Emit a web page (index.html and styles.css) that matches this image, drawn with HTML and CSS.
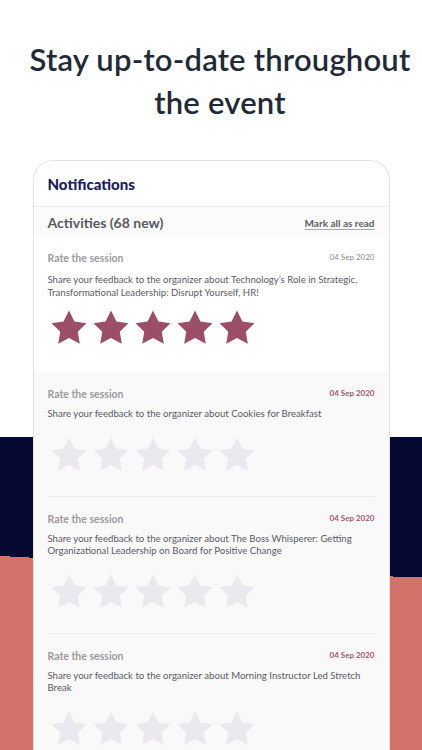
FILE: index.html
```html
<!DOCTYPE html>
<html lang="en">
<head>
<meta charset="utf-8">
<title>Notifications</title>
<link rel="stylesheet" href="styles.css">
</head>
<body>
<div class="page">
  <h1 class="headline">Stay up-to-date throughout<br>the event</h1>
  <div class="card">
    <div class="card-header">Notifications</div>
    <div class="activities">
      <span class="activities-title">Activities (68 new)</span>
      <a class="mark-read">Mark all as read</a>
    </div>

    <div class="item item-read">
      <div class="item-inner">
        <div class="item-top">
          <span class="item-title">Rate the session</span>
          <span class="item-date">04 Sep 2020</span>
        </div>
        <p class="item-desc">Share your feedback to the organizer about Technology’s Role in Strategic, Transformational Leadership: Disrupt Yourself, HR!</p>
        <div class="stars stars-filled">
          <svg viewBox="0 0 24 24"><path d="M12 2l3.09 6.26L22 9.27l-5 4.87 1.18 6.88L12 17.77l-6.18 3.25L7 14.14 2 9.27l6.91-1.01L12 2z"/></svg>
          <svg viewBox="0 0 24 24"><path d="M12 2l3.09 6.26L22 9.27l-5 4.87 1.18 6.88L12 17.77l-6.18 3.25L7 14.14 2 9.27l6.91-1.01L12 2z"/></svg>
          <svg viewBox="0 0 24 24"><path d="M12 2l3.09 6.26L22 9.27l-5 4.87 1.18 6.88L12 17.77l-6.18 3.25L7 14.14 2 9.27l6.91-1.01L12 2z"/></svg>
          <svg viewBox="0 0 24 24"><path d="M12 2l3.09 6.26L22 9.27l-5 4.87 1.18 6.88L12 17.77l-6.18 3.25L7 14.14 2 9.27l6.91-1.01L12 2z"/></svg>
          <svg viewBox="0 0 24 24"><path d="M12 2l3.09 6.26L22 9.27l-5 4.87 1.18 6.88L12 17.77l-6.18 3.25L7 14.14 2 9.27l6.91-1.01L12 2z"/></svg>
        </div>
      </div>
    </div>

    <div class="item item-new">
      <div class="item-inner">
        <div class="item-top">
          <span class="item-title">Rate the session</span>
          <span class="item-date">04 Sep 2020</span>
        </div>
        <p class="item-desc">Share your feedback to the organizer about Cookies for Breakfast</p>
        <div class="stars">
          <svg viewBox="0 0 24 24"><path d="M12 2l3.09 6.26L22 9.27l-5 4.87 1.18 6.88L12 17.77l-6.18 3.25L7 14.14 2 9.27l6.91-1.01L12 2z"/></svg>
          <svg viewBox="0 0 24 24"><path d="M12 2l3.09 6.26L22 9.27l-5 4.87 1.18 6.88L12 17.77l-6.18 3.25L7 14.14 2 9.27l6.91-1.01L12 2z"/></svg>
          <svg viewBox="0 0 24 24"><path d="M12 2l3.09 6.26L22 9.27l-5 4.87 1.18 6.88L12 17.77l-6.18 3.25L7 14.14 2 9.27l6.91-1.01L12 2z"/></svg>
          <svg viewBox="0 0 24 24"><path d="M12 2l3.09 6.26L22 9.27l-5 4.87 1.18 6.88L12 17.77l-6.18 3.25L7 14.14 2 9.27l6.91-1.01L12 2z"/></svg>
          <svg viewBox="0 0 24 24"><path d="M12 2l3.09 6.26L22 9.27l-5 4.87 1.18 6.88L12 17.77l-6.18 3.25L7 14.14 2 9.27l6.91-1.01L12 2z"/></svg>
        </div>
      </div>
    </div>

    <div class="item item-new">
      <div class="item-inner">
        <div class="item-top">
          <span class="item-title">Rate the session</span>
          <span class="item-date">04 Sep 2020</span>
        </div>
        <p class="item-desc">Share your feedback to the organizer about The Boss Whisperer: Getting Organizational Leadership on Board for Positive Change</p>
        <div class="stars">
          <svg viewBox="0 0 24 24"><path d="M12 2l3.09 6.26L22 9.27l-5 4.87 1.18 6.88L12 17.77l-6.18 3.25L7 14.14 2 9.27l6.91-1.01L12 2z"/></svg>
          <svg viewBox="0 0 24 24"><path d="M12 2l3.09 6.26L22 9.27l-5 4.87 1.18 6.88L12 17.77l-6.18 3.25L7 14.14 2 9.27l6.91-1.01L12 2z"/></svg>
          <svg viewBox="0 0 24 24"><path d="M12 2l3.09 6.26L22 9.27l-5 4.87 1.18 6.88L12 17.77l-6.18 3.25L7 14.14 2 9.27l6.91-1.01L12 2z"/></svg>
          <svg viewBox="0 0 24 24"><path d="M12 2l3.09 6.26L22 9.27l-5 4.87 1.18 6.88L12 17.77l-6.18 3.25L7 14.14 2 9.27l6.91-1.01L12 2z"/></svg>
          <svg viewBox="0 0 24 24"><path d="M12 2l3.09 6.26L22 9.27l-5 4.87 1.18 6.88L12 17.77l-6.18 3.25L7 14.14 2 9.27l6.91-1.01L12 2z"/></svg>
        </div>
      </div>
    </div>

    <div class="item item-new">
      <div class="item-inner">
        <div class="item-top">
          <span class="item-title">Rate the session</span>
          <span class="item-date">04 Sep 2020</span>
        </div>
        <p class="item-desc">Share your feedback to the organizer about Morning Instructor Led Stretch Break</p>
        <div class="stars">
          <svg viewBox="0 0 24 24"><path d="M12 2l3.09 6.26L22 9.27l-5 4.87 1.18 6.88L12 17.77l-6.18 3.25L7 14.14 2 9.27l6.91-1.01L12 2z"/></svg>
          <svg viewBox="0 0 24 24"><path d="M12 2l3.09 6.26L22 9.27l-5 4.87 1.18 6.88L12 17.77l-6.18 3.25L7 14.14 2 9.27l6.91-1.01L12 2z"/></svg>
          <svg viewBox="0 0 24 24"><path d="M12 2l3.09 6.26L22 9.27l-5 4.87 1.18 6.88L12 17.77l-6.18 3.25L7 14.14 2 9.27l6.91-1.01L12 2z"/></svg>
          <svg viewBox="0 0 24 24"><path d="M12 2l3.09 6.26L22 9.27l-5 4.87 1.18 6.88L12 17.77l-6.18 3.25L7 14.14 2 9.27l6.91-1.01L12 2z"/></svg>
          <svg viewBox="0 0 24 24"><path d="M12 2l3.09 6.26L22 9.27l-5 4.87 1.18 6.88L12 17.77l-6.18 3.25L7 14.14 2 9.27l6.91-1.01L12 2z"/></svg>
        </div>
      </div>
    </div>
  </div>
</div>
</body>
</html>
```

FILE: styles.css
```css
html, body {
  margin: 0;
  padding: 0;
}
body {
  width: 422px;
  height: 750px;
  overflow: hidden;
  font-family: "Lato", "Noto Sans", sans-serif;
  background-color: #ffffff;
  background-image:
    linear-gradient(to top right, #d3716b 50%, transparent 50%),
    linear-gradient(#d3716b, #d3716b),
    linear-gradient(#050833, #050833);
  background-repeat: no-repeat;
  background-position: 0 556px, 0 577px, 0 437px;
  background-size: 422px 22px, 422px 200px, 422px 320px;
}
.page {
  display: flex;
  flex-direction: column;
  align-items: center;
  height: 750px;
}
.headline {
  margin: 38px 0 0;
  padding-left: 18px;
  font-size: 31px;
  line-height: 43px;
  font-weight: 600;
  color: #232a37;
  text-align: center;
  letter-spacing: 0.2px;
}
.card {
  margin-top: 36px;
  width: 355px;
  flex: 1;
  background: #ffffff;
  border: 1px solid #e3e3e6;
  border-bottom: none;
  border-radius: 20px 20px 0 0;
  overflow: hidden;
}
.card-header {
  height: 45px;
  padding: 0 14px;
  display: flex;
  align-items: center;
  font-size: 15px;
  font-weight: 900;
  color: #1a1c5c;
  border-bottom: 1px solid #ececee;
  box-shadow: 0 1px 2px rgba(0,0,0,0.04);
}
.activities {
  height: 31px;
  padding: 0 14px;
  display: flex;
  align-items: center;
  justify-content: space-between;
  background: #fbfbfb;
}
.activities-title {
  font-size: 14px;
  font-weight: 700;
  color: #58585f;
}
.mark-read {
  font-size: 10px;
  font-weight: 700;
  color: #5e5e66;
  text-decoration: underline;
  text-decoration-color: #a8a8b0;
  text-underline-offset: 2px;
}
.item-inner {
  margin: 0 14px;
}
.item-read .item-inner {
  padding: 13px 0 23px;
}
.item-new {
  background: #faf9fa;
}
.item-new .item-inner {
  padding: 15px 0 20px;
  border-bottom: 1px solid #ececef;
}
.item-top {
  display: flex;
  justify-content: space-between;
  align-items: flex-start;
  height: 14px;
}
.item-title {
  font-size: 10.5px;
  line-height: 14px;
  font-weight: 700;
  color: #9b9aa0;
}
.item-date {
  font-size: 8px;
  line-height: 12px;
  color: #8c8c92;
}
.item-new .item-date {
  font-weight: 700;
  color: #a1566f;
}
.item-desc {
  margin: 8px 0 0;
  font-size: 9.6px;
  line-height: 13px;
  color: #5b5a66;
}
.item-new .item-desc {
  margin-top: 7px;
  line-height: 12px;
}
.stars {
  display: flex;
  margin-top: 14px;
}
.item-read .stars {
  margin-top: 8px;
}
.stars svg {
  width: 42px;
  height: 42px;
  display: block;
  fill: #ebe9ef;
}
.stars-filled svg {
  fill: #9c4e69;
}
```
